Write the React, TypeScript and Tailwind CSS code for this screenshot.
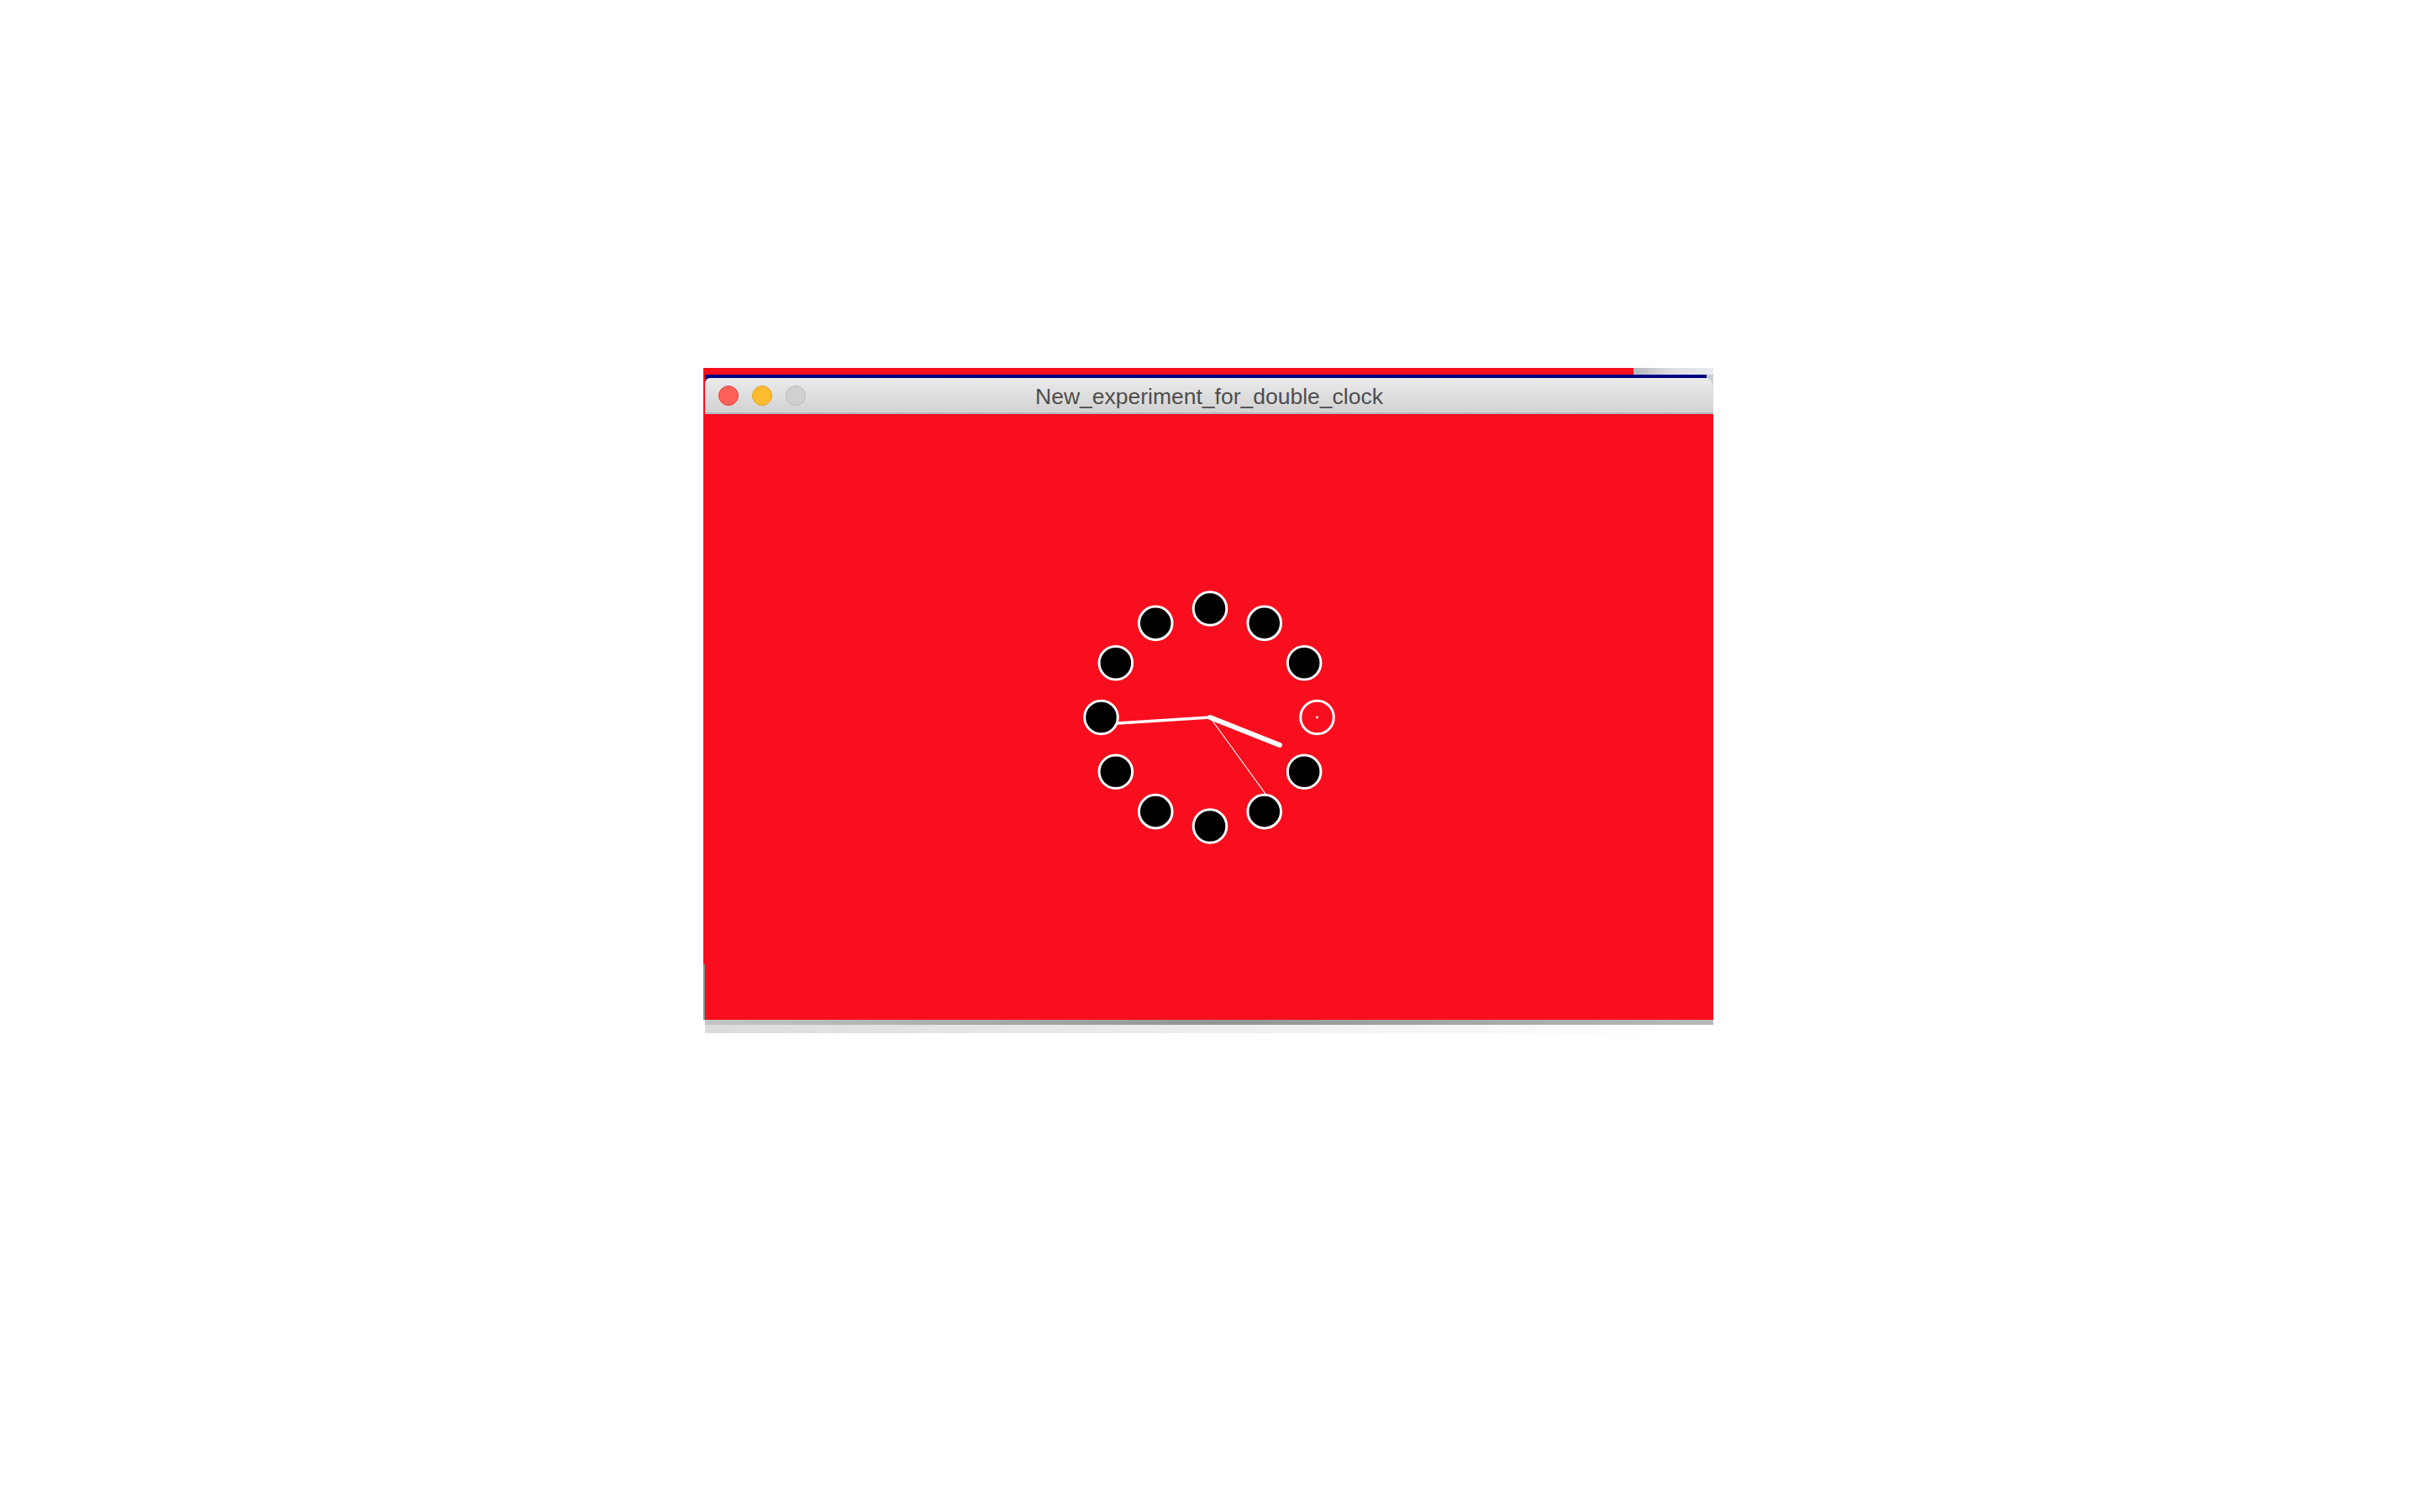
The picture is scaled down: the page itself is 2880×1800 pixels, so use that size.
import React from "react";

const CX = 603;
const CY = 361;
const R = 129.5;

function Clock() {
  const dots = Array.from({ length: 12 }, (_, i) => {
    const a = (i * Math.PI) / 6;
    return { x: CX + R * Math.sin(a), y: CY - R * Math.cos(a), i };
  });
  return (
    <svg width="1202" height="721" viewBox="0 0 1202 721" className="block">
      <rect x="0" y="0" width="1202" height="721" fill="#f90e1e" />
      <rect x="0" y="655" width="2" height="66" fill="#8a8a8a" />
      {dots.map((d) =>
        d.i === 3 ? (
          <g key={d.i}>
            <circle cx={d.x - 2} cy={d.y} r="19.8" fill="none" stroke="#fff" strokeWidth="3" />
            <circle cx={d.x - 2} cy={d.y} r="1.4" fill="#fff" />
          </g>
        ) : (
          <circle key={d.i} cx={d.x} cy={d.y} r="19.8" fill="#000" stroke="#fff" strokeWidth="3" />
        )
      )}
      <line x1={CX} y1={CY} x2={CX - 110} y2={CY + 7} stroke="#fff" strokeWidth="3.5" strokeLinecap="round" />
      <line x1={CX} y1={CY} x2={CX + 83} y2={CY + 33} stroke="#fff" strokeWidth="6" strokeLinecap="round" />
      <line x1={CX} y1={CY} x2={CX + 66} y2={CY + 91} stroke="#fff" strokeWidth="1.2" strokeLinecap="round" />
    </svg>
  );
}

export default function App() {
  return (
    <div className="w-[2880px] h-[1800px] bg-white overflow-hidden">
      <div className="ml-[837px] pt-[438px] w-[1202px] flex flex-col">
        <div className="flex h-[8px]">
          <div className="w-[1107px] bg-[#f90e1e]" />
          <div className="flex-1 bg-gradient-to-r from-[#b4b8bd] via-[#dde1e6] to-[#e8ecf0]" />
        </div>
        <div className="flex h-[4px]">
          <div className="w-[2px] bg-[#f90e1e]" />
          <div className="w-[1192px] bg-[#000080]" />
          <div className="flex-1 bg-[#c9ccd0]" />
        </div>
        <div className="flex h-[43px] bg-[#f90e1e]">
          <div className="w-[2px]" />
          <div className="flex-1 flex bg-[linear-gradient(to_right,#000080_50%,#c9ccd0_50%)]">
            <div className="flex-1 relative flex items-center rounded-tr-[10px] rounded-tl-[6px] bg-gradient-to-b from-[#ebebeb] to-[#d2d2d2] border-b-2 border-[#b9b9b9]">
              <div className="flex items-center gap-[16px] pl-[16px]">
                <div className="w-[24px] h-[24px] rounded-full bg-[#fe5f57] border border-[#e0443e]" />
                <div className="w-[24px] h-[24px] rounded-full bg-[#febc2e] border border-[#dea123]" />
                <div className="w-[24px] h-[24px] rounded-full bg-[#d0d0d0] border border-[#b8b8b8]" />
              </div>
              <div
                className="absolute inset-0 pt-[5px] flex items-center justify-center text-[26.5px] text-[#4d4d4d]"
                style={{ fontFamily: '"Liberation Sans", Arial, sans-serif' }}
              >
                New_experiment_for_double_clock
              </div>
            </div>
          </div>
        </div>
        <Clock />
        <div className="h-[6px] bg-gradient-to-r from-[#c4c4c4] via-[#949494] to-[#b8b8b8] ml-[2px]" />
        <div className="h-[10px] bg-gradient-to-r from-[#dcdcdc] via-[#eeeeee] to-white ml-[2px]" />
      </div>
    </div>
  );
}
